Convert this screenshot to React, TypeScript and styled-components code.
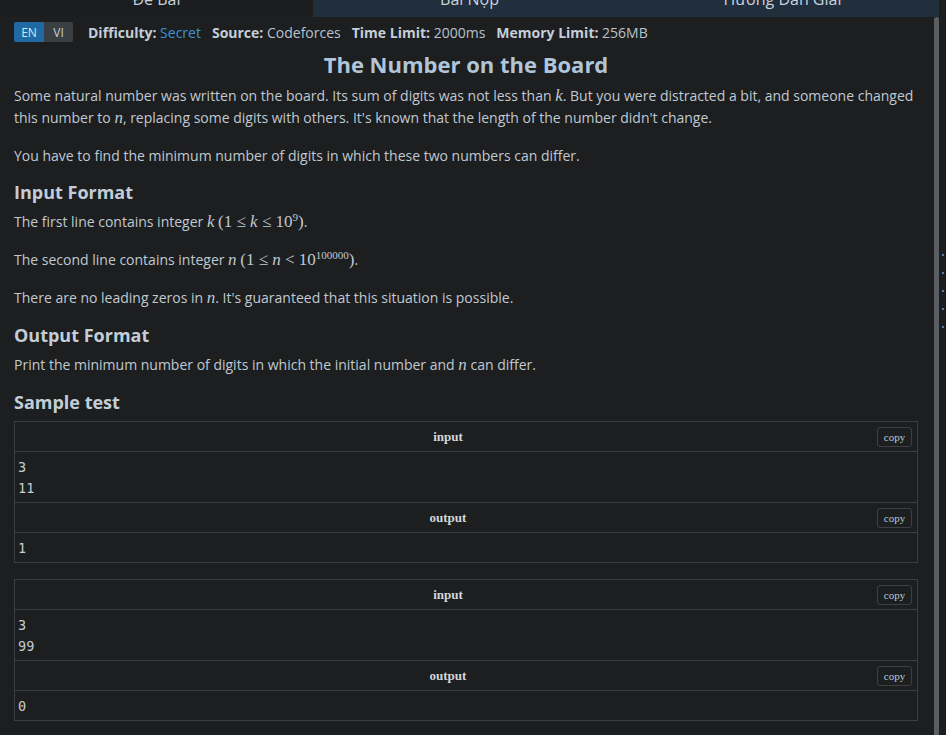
import React from "react";
import styled, { createGlobalStyle } from "styled-components";

const GlobalStyle = createGlobalStyle`
  html, body { margin: 0; padding: 0; background: #1c1e20; }
  body { font-family: "Open Sans", "Noto Sans", sans-serif; color: #c3cbd3; }
  * { box-sizing: border-box; }
`;

const Page = styled.div`
  display: flex;
  width: 946px;
  height: 735px;
  overflow: hidden;
  background: #1c1e20;
`;

const Main = styled.div`
  width: 939px;
  display: flex;
  flex-direction: column;
`;

const TabBar = styled.div`
  display: grid;
  grid-template-columns: repeat(3, 1fr);
  height: 17px;
  overflow: hidden;
`;

const Tab = styled.div<{ $active?: boolean }>`
  background: ${(p) => (p.$active ? "#1b1d1f" : "#212e3c")};
  color: #c9d3dd;
  font-size: 16px;
  line-height: 22px;
  text-align: center;
  margin-top: -12px;
  height: 29px;
`;

const Body = styled.div`
  flex: 1;
  display: flex;
  min-height: 0;
`;

const Content = styled.div`
  flex: 1;
  padding: 5px 16px 0 14px;
  overflow: hidden;
`;

const ScrollTrack = styled.div`
  width: 5px;
  background: #1c1e20;
  display: flex;
`;

const ScrollThumb = styled.div`
  flex: 1;
  background: #5a5e62;
  border-radius: 3px 3px 0 0;
`;

const SideStrip = styled.div`
  flex: 1;
  background: #1b1d1f;
  display: flex;
  flex-direction: column;
  align-items: flex-end;
  padding-top: 254px;
  padding-right: 2px;
  gap: 16px;
`;

const Dot = styled.span`
  width: 2px;
  height: 2px;
  background: #6fa3d6;
  border-radius: 1px;
`;

const MetaRow = styled.div`
  display: flex;
  align-items: center;
  height: 20px;
  font-size: 14px;
`;

const LangGroup = styled.div`
  display: flex;
  height: 20px;
  border-radius: 2px;
  overflow: hidden;
  margin-right: 15px;
`;

const LangButton = styled.span<{ $active?: boolean }>`
  display: flex;
  align-items: center;
  justify-content: center;
  width: ${(p) => (p.$active ? "30px" : "29px")};
  font-size: 12px;
  background: ${(p) => (p.$active ? "#1f6aa5" : "#3a3f44")};
  color: ${(p) => (p.$active ? "#d6e4f0" : "#c9ced3")};
`;

const MetaItem = styled.span`
  margin-right: 11px;
  color: #b9c3cd;
  white-space: nowrap;
`;

const MetaLabel = styled.b`
  color: #c5ced8;
  font-weight: 700;
`;

const MetaLink = styled.span`
  color: #3f92d2;
`;

const Title = styled.h1`
  margin: 7px 0 6px;
  font-size: 22px;
  line-height: 30px;
  font-weight: 700;
  text-align: center;
  color: #b1c5d9;
`;

const Para = styled.p`
  margin: 0 0 16px;
  font-size: 14px;
  line-height: 22px;
  color: #c0c9d2;
`;

const Heading = styled.h3<{ $gap?: number }>`
  margin: 0 0 10px;
  padding-top: ${(p) => p.$gap ?? 0}px;
  font-size: 18px;
  line-height: 18px;
  font-weight: 700;
  color: #c3cdd7;
`;

const M = styled.span`
  font-family: "Liberation Serif", "DejaVu Serif", serif;
  font-size: 17px;
  line-height: 1;
`;

const MI = styled.i`
  font-family: "Liberation Serif", "DejaVu Serif", serif;
  font-size: 17px;
  line-height: 1;
`;

const Sup = styled.sup`
  font-size: 11px;
  line-height: 0;
  vertical-align: 6px;
`;

const SampleBox = styled.div`
  border: 1px solid #3a3d41;
  margin: 10px 0 16px;
`;

const SampleHeader = styled.div`
  height: 30px;
  display: flex;
  align-items: center;
  border-bottom: 1px solid #3a3d41;
`;

const SampleLabel = styled.span`
  flex: 1;
  padding-left: 4px;
  text-align: center;
  font-family: "Liberation Serif", "Times New Roman", serif;
  font-weight: 700;
  font-size: 13px;
  color: #d2d6da;
`;

const CopyButton = styled.button`
  width: 35px;
  height: 20px;
  margin-right: 5px;
  padding: 0;
  background: #1c1e20;
  border: 1px solid #3c4046;
  border-radius: 3px;
  color: #b6c8da;
  font-family: "Liberation Serif", "Times New Roman", serif;
  font-size: 11px;
  font-weight: 400;
`;

const SampleData = styled.pre<{ $last?: boolean }>`
  margin: 0;
  padding: 5px 3px 3px;
  font-family: "DejaVu Sans Mono", "Liberation Mono", monospace;
  font-size: 13.5px;
  line-height: 21px;
  color: #c6ccd2;
  border-bottom: ${(p) => (p.$last ? "none" : "1px solid #3a3d41")};
`;

const samples = [
  { input: "3\n11", output: "1" },
  { input: "3\n99", output: "0" },
];

export default function App() {
  return (
    <>
      <GlobalStyle />
      <Page>
        <Main>
          <TabBar>
            <Tab $active>Đề Bài</Tab>
            <Tab>Bài Nộp</Tab>
            <Tab>Hướng Dẫn Giải</Tab>
          </TabBar>
          <Body>
            <Content>
              <MetaRow>
                <LangGroup>
                  <LangButton $active>EN</LangButton>
                  <LangButton>VI</LangButton>
                </LangGroup>
                <MetaItem>
                  <MetaLabel>Difficulty:</MetaLabel> <MetaLink>Secret</MetaLink>
                </MetaItem>
                <MetaItem>
                  <MetaLabel>Source:</MetaLabel> Codeforces
                </MetaItem>
                <MetaItem>
                  <MetaLabel>Time Limit:</MetaLabel> 2000ms
                </MetaItem>
                <MetaItem>
                  <MetaLabel>Memory Limit:</MetaLabel> 256MB
                </MetaItem>
              </MetaRow>
              <Title>The Number on the Board</Title>
              <Para>
                Some natural number was written on the board. Its sum of digits was not less than <MI>k</MI>. But
                you were distracted a bit, and someone changed this number to <MI>n</MI>, replacing some digits
                with others. It's known that the length of the number didn't change.
              </Para>
              <Para>You have to find the minimum number of digits in which these two numbers can differ.</Para>
              <Heading>Input Format</Heading>
              <Para>
                The first line contains integer <MI>k</MI> <M>(1 ≤ <MI>k</MI> ≤ 10<Sup>9</Sup>)</M>.
              </Para>
              <Para>
                The second line contains integer <MI>n</MI> <M>(1 ≤ <MI>n</MI> &lt; 10<Sup>100000</Sup>)</M>.
              </Para>
              <Para>
                There are no leading zeros in <MI>n</MI>. It's guaranteed that this situation is possible.
              </Para>
              <Heading $gap={1}>Output Format</Heading>
              <Para>
                Print the minimum number of digits in which the initial number and <MI>n</MI> can differ.
              </Para>
              <Heading $gap={1}>Sample test</Heading>
              {samples.map((s, i) => (
                <SampleBox key={i}>
                  <SampleHeader>
                    <SampleLabel>input</SampleLabel>
                    <CopyButton>copy</CopyButton>
                  </SampleHeader>
                  <SampleData>{s.input}</SampleData>
                  <SampleHeader>
                    <SampleLabel>output</SampleLabel>
                    <CopyButton>copy</CopyButton>
                  </SampleHeader>
                  <SampleData $last>{s.output}</SampleData>
                </SampleBox>
              ))}
            </Content>
            <ScrollTrack>
              <ScrollThumb />
            </ScrollTrack>
          </Body>
        </Main>
        <SideStrip>
          <Dot />
          <Dot />
          <Dot />
          <Dot />
          <Dot />
        </SideStrip>
      </Page>
    </>
  );
}
